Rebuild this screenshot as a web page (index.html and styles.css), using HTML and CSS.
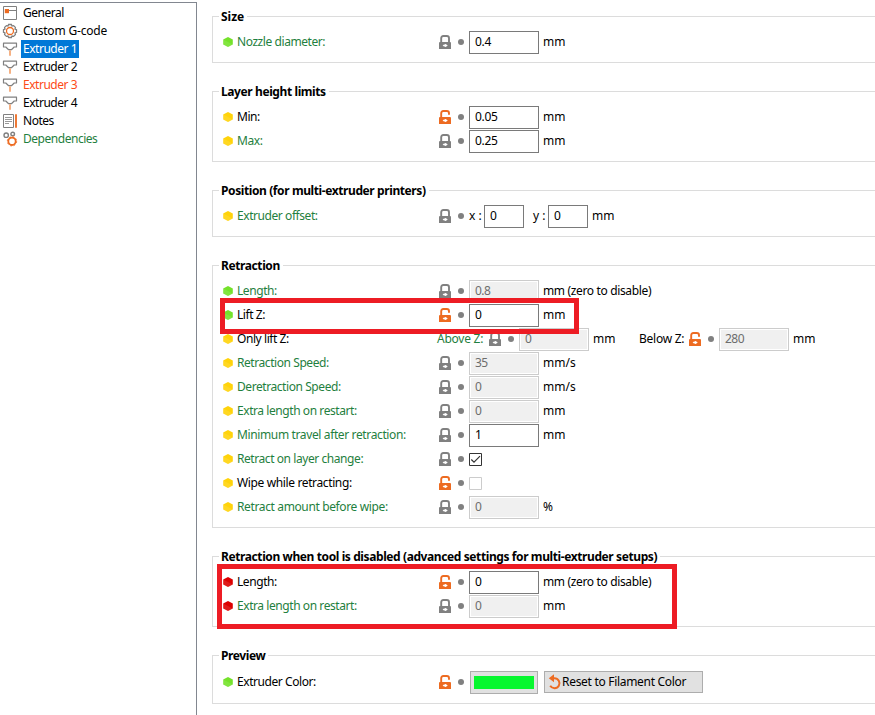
FILE: index.html
```html
<!DOCTYPE html>
<html lang="en">
<head>
<meta charset="utf-8">
<title>Printer Settings</title>
<link rel="stylesheet" href="styles.css">
</head>
<body>
<svg class="defs" aria-hidden="true">
  <symbol id="lock" viewBox="0 0 12 14"><path d="M2.2 7V3.2Q2.2 1 4.4 1H7.8Q10 1 10 3.2V7" fill="none" stroke="currentColor" stroke-width="1.9"/><path d="M0 8Q0 7 1 7H11Q12 7 12 8V14H0Z" fill="currentColor"/><path d="M3.6 10.5 5 9.6H6.2V9H7.4V9.9H8.4V11.1H7.4V12H6.2V11.4H5Z" fill="#fff"/></symbol>
  <symbol id="unlock" viewBox="0 0 12 14"><path d="M2.2 7V3.2Q2.2 1 4.4 1H7.8Q10 1 10 3.2V4.7" fill="none" stroke="currentColor" stroke-width="1.9"/><path d="M0 8Q0 7 1 7H11Q12 7 12 8V14H0Z" fill="currentColor"/><path d="M3.6 10.5 5 9.6H6.2V9H7.4V9.9H8.4V11.1H7.4V12H6.2V11.4H5Z" fill="#fff"/></symbol>
  <symbol id="hex" viewBox="0 0 10 10"><path d="M5 0 9.8 2.4V7.6L5 10 .2 7.6V2.4Z" fill="currentColor"/><path d="M.2 2.4 9.8 7.6 5 10 .2 7.6Z" fill="#fff" opacity=".1"/></symbol>
  <symbol id="nozzle" viewBox="0 0 16 16"><path d="M1.5 2.2H14.5V6H12.2L9.4 8.7H6.6L3.8 6H1.5Z" fill="#fff" stroke="#808080" stroke-width="1.2" stroke-linejoin="round"/><path d="M8 9.3V14.7" stroke="#f5b183" stroke-width="2"/></symbol>
</svg>
<div class="app">
<nav class="tree">
  <div class="item"><svg class="ico" viewBox="0 0 16 16"><path d="M1.5 1.5H14.5V14.5H1.5ZM7 5.5H14.5" fill="none" stroke="#808080"/><path d="M2.8 4H7V8.2H2.8Z" fill="#ed6b21"/></svg><span>General</span></div>
  <div class="item"><svg class="ico" viewBox="0 0 16 16"><path d="M6.6 1.5H9.4L10 3 11.6 2.6 13.4 4.4 13 6 14.5 6.6V9.4L13 10 13.4 11.6 11.6 13.4 10 13 9.4 14.5H6.6L6 13 4.4 13.4 2.6 11.6 3 10 1.5 9.4V6.6L3 6 2.6 4.4 4.4 2.6 6 3Z" fill="none" stroke="#808080" stroke-width="1.3"/><circle cx="8" cy="8" r="3.5" fill="none" stroke="#ed6b21" stroke-width="1.3"/></svg><span class="gcode">Custom G-code</span></div>
  <div class="item selected"><svg class="ico"><use href="#nozzle"/></svg><span>Extruder 1</span></div>
  <div class="item"><svg class="ico"><use href="#nozzle"/></svg><span>Extruder 2</span></div>
  <div class="item changed"><svg class="ico"><use href="#nozzle"/></svg><span>Extruder 3</span></div>
  <div class="item"><svg class="ico"><use href="#nozzle"/></svg><span>Extruder 4</span></div>
  <div class="item"><svg class="ico" viewBox="0 0 16 16"><path d="M1.5 1.5H11.5V14.5H1.5Z" fill="none" stroke="#808080"/><path d="M3 4.5H10M3 6.5H10M3 8.5H10M3 10.5H7" stroke="#999"/><path d="M14 1.3V14.7" stroke="#ed6b21" stroke-width="1.8"/></svg><span>Notes</span></div>
  <div class="item system"><svg class="ico" viewBox="0 0 16 16"><g fill="none" stroke="#808080" stroke-width="1.4"><circle cx="4.2" cy="4.2" r="2.2"/><circle cx="10.7" cy="3" r="1.8"/></g><circle cx="10" cy="10.3" r="3.7" fill="#fff" stroke="#ed6b21" stroke-width="1.8"/><circle cx="10" cy="10.3" r="4.7" fill="none" stroke="#ed6b21" stroke-width=".8" stroke-dasharray="1.8 1.89"/></svg><span>Dependencies</span></div>
</nav>
<main class="page">
  <section class="group">
    <h2 class="t-size">Size</h2>
    <div class="row system"><svg class="hex simple"><use href="#hex"/></svg><span class="label">Nozzle diameter:</span><svg class="lock"><use href="#lock"/></svg><i class="dot"></i><span class="field">0.4</span><span class="unit">mm</span></div>
  </section>
  <section class="group">
    <h2>Layer height limits</h2>
    <div class="row"><svg class="hex adv"><use href="#hex"/></svg><span class="label">Min:</span><svg class="lock open"><use href="#unlock"/></svg><i class="dot"></i><span class="field">0.05</span><span class="unit">mm</span></div>
    <div class="row system"><svg class="hex adv"><use href="#hex"/></svg><span class="label">Max:</span><svg class="lock"><use href="#lock"/></svg><i class="dot"></i><span class="field">0.25</span><span class="unit">mm</span></div>
  </section>
  <section class="group">
    <h2>Position (for multi-extruder printers)</h2>
    <div class="row system"><svg class="hex adv"><use href="#hex"/></svg><span class="label">Extruder offset:</span><svg class="lock"><use href="#lock"/></svg><i class="dot"></i><span class="axis">x :</span><span class="field short">0</span><span class="axis second">y :</span><span class="field short">0</span><span class="unit">mm</span></div>
  </section>
  <section class="group">
    <h2>Retraction</h2>
    <div class="row system"><svg class="hex simple"><use href="#hex"/></svg><span class="label">Length:</span><svg class="lock"><use href="#lock"/></svg><i class="dot"></i><span class="field off">0.8</span><span class="unit long">mm (zero to disable)</span></div>
    <div class="row marked"><svg class="hex simple"><use href="#hex"/></svg><span class="label">Lift Z:</span><svg class="lock open"><use href="#unlock"/></svg><i class="dot"></i><span class="field">0</span><span class="unit">mm</span><div class="mark mark-lift"></div></div>
    <div class="row"><svg class="hex adv"><use href="#hex"/></svg><span class="label narrow">Only lift Z:</span><span class="sub green">Above Z:</span><svg class="lock"><use href="#lock"/></svg><i class="dot"></i><span class="field off">0</span><span class="unit wide">mm</span><span class="sub">Below Z:</span><svg class="lock open"><use href="#unlock"/></svg><i class="dot"></i><span class="field off">280</span><span class="unit">mm</span></div>
    <div class="row system"><svg class="hex adv"><use href="#hex"/></svg><span class="label">Retraction Speed:</span><svg class="lock"><use href="#lock"/></svg><i class="dot"></i><span class="field off">35</span><span class="unit">mm/s</span></div>
    <div class="row system"><svg class="hex adv"><use href="#hex"/></svg><span class="label">Deretraction Speed:</span><svg class="lock"><use href="#lock"/></svg><i class="dot"></i><span class="field off">0</span><span class="unit">mm/s</span></div>
    <div class="row system"><svg class="hex adv"><use href="#hex"/></svg><span class="label">Extra length on restart:</span><svg class="lock"><use href="#lock"/></svg><i class="dot"></i><span class="field off">0</span><span class="unit">mm</span></div>
    <div class="row system"><svg class="hex adv"><use href="#hex"/></svg><span class="label travel">Minimum travel after retraction:</span><svg class="lock"><use href="#lock"/></svg><i class="dot"></i><span class="field">1</span><span class="unit">mm</span></div>
    <div class="row system"><svg class="hex adv"><use href="#hex"/></svg><span class="label">Retract on layer change:</span><svg class="lock"><use href="#lock"/></svg><i class="dot"></i><svg class="check" viewBox="0 0 13 13"><path d="M.5 .5H12.5V12.5H.5Z" fill="#fff" stroke="#333"/><path d="M2.3 6.5 5 9.2 11 3.2" fill="none" stroke="#333" stroke-width="1.2"/></svg></div>
    <div class="row"><svg class="hex adv"><use href="#hex"/></svg><span class="label travel">Wipe while retracting:</span><svg class="lock open"><use href="#unlock"/></svg><i class="dot"></i><svg class="check" viewBox="0 0 13 13"><path d="M.5 .5H12.5V12.5H.5Z" fill="#fff" stroke="#ccc"/></svg></div>
    <div class="row system"><svg class="hex adv"><use href="#hex"/></svg><span class="label travel">Retract amount before wipe:</span><svg class="lock"><use href="#lock"/></svg><i class="dot"></i><span class="field off">0</span><span class="unit">%</span></div>
  </section>
  <section class="group">
    <h2>Retraction when tool is disabled (advanced settings for multi-extruder setups)</h2>
    <div class="row marked"><svg class="hex expert"><use href="#hex"/></svg><span class="label">Length:</span><svg class="lock open"><use href="#unlock"/></svg><i class="dot"></i><span class="field">0</span><span class="unit long">mm (zero to disable)</span><div class="mark mark-tool"></div></div>
    <div class="row system"><svg class="hex expert"><use href="#hex"/></svg><span class="label">Extra length on restart:</span><svg class="lock"><use href="#lock"/></svg><i class="dot"></i><span class="field off">0</span><span class="unit">mm</span></div>
  </section>
  <section class="group">
    <h2>Preview</h2>
    <div class="row tall"><svg class="hex simple"><use href="#hex"/></svg><span class="label">Extruder Color:</span><svg class="lock open"><use href="#unlock"/></svg><i class="dot"></i><span class="swatch"></span><span class="reset"><svg viewBox="0 0 14 16"><path d="M3.5 4.2H6.5A5 5 0 1 1 2.2 11.8" fill="none" stroke="#ed6b21" stroke-width="2"/><path d="M.8 4.2 6 .2V8.2Z" fill="#ed6b21"/></svg>Reset to Filament Color</span></div>
  </section>
</main>
</div>
</body>
</html>
```
FILE: styles.css
```css
* { box-sizing: border-box; }
body {
  margin: 0;
  background: #fff;
  color: #000;
  font: 12px/16px "Noto Sans", "Open Sans", sans-serif;
  overflow: hidden;
}
.defs { position: absolute; width: 0; height: 0; }
.app { display: flex; height: 715px; }

.tree {
  flex: none;
  width: 197px;
  margin-top: 2px;
  padding: 1px 0 0 2px;
  border-top: 1px solid #828790;
  border-right: 1px solid #828790;
}
.item { display: flex; align-items: center; height: 18px; }
.ico { width: 16px; height: 16px; margin-right: 3px; }
.item span { height: 18px; line-height: 18px; padding: 0 2px; white-space: nowrap; letter-spacing: -.47px; }
.item .gcode { letter-spacing: -.18px; }
.selected span { background: #0078d7; color: #fff; }
.changed { color: #fd4b17; }
.system { color: #1f8040; }

.page { flex: 1; min-width: 0; padding: 16px 0 0 15px; }
.group {
  border: 1px solid #dcdcdc;
  border-right: 0;
  padding-bottom: 8px;
  margin-bottom: 28px;
}
h2 {
  width: max-content;
  height: 16px;
  margin: -8px 0 5px 6px;
  padding: 0 3px 0 2px;
  background: #fff;
  font-size: 12px;
  line-height: 16px;
  font-weight: 700;
  letter-spacing: -.4px;
  white-space: nowrap;
}
.t-size { letter-spacing: 0; }
.row { display: flex; align-items: center; height: 24px; padding-left: 10px; white-space: nowrap; }
.row > * { flex: none; }
.row.tall { height: 26px; }
.hex { width: 10px; height: 10px; margin-right: 4px; }
.simple { color: #74e22a; }
.adv { color: #ffd30a; }
.expert { color: #dc0000; }
.label { width: 202px; letter-spacing: -.43px; }
.label.travel { letter-spacing: -.37px; }
.label.narrow { width: 200px; }
.sub { width: 50px; color: #000; letter-spacing: -.25px; }
.narrow + .sub { margin-right: 2px; }
.sub.green { color: #1f8040; }
.lock { width: 12px; height: 14px; color: #808080; }
.lock.open { color: #ed6b21; }
.dot { width: 6px; height: 6px; margin: 0 5px 0 7px; border-radius: 50%; background: #808080; }
.field {
  width: 70px;
  height: 23px;
  margin-top: 1px;
  padding-left: 5px;
  border: 1px solid #7a7a7a;
  background: #fff;
  color: #000;
  line-height: 20px;
  letter-spacing: -.35px;
}
.field.short { width: 40px; }
.field.off { border-color: #ccc; background: #f0f0f0; box-shadow: inset 0 0 0 1px #fff; color: #6d6d6d; letter-spacing: -.5px; }
.unit { margin-left: 4px; color: #000; }
.unit.long { letter-spacing: -.35px; }
.unit.wide { width: 46px; }
.axis { width: 15px; color: #000; }
.axis.second { margin-left: 9px; }
.check { width: 13px; height: 13px; }
.swatch {
  width: 68px;
  height: 23px;
  margin: 0 6px 0 1px;
  padding: 4px 3px;
  border: 1px solid #adadad;
  background: linear-gradient(#07f72f, #07f72f) content-box, #e1e1e1;
}
.reset {
  display: flex;
  align-items: center;
  width: 159px;
  height: 22px;
  padding-left: 3px;
  border: 1px solid #adadad;
  background: #e1e1e1;
  letter-spacing: -.3px;
}
.reset svg { width: 14px; height: 16px; }

.marked { position: relative; }
.mark { position: absolute; border: 5px solid #ed1c24; pointer-events: none; z-index: 1; }
.mark-lift { left: 7px; top: -5px; width: 359px; height: 36px; }
.mark-tool { left: 4px; top: -6px; width: 460px; height: 65px; }
```
